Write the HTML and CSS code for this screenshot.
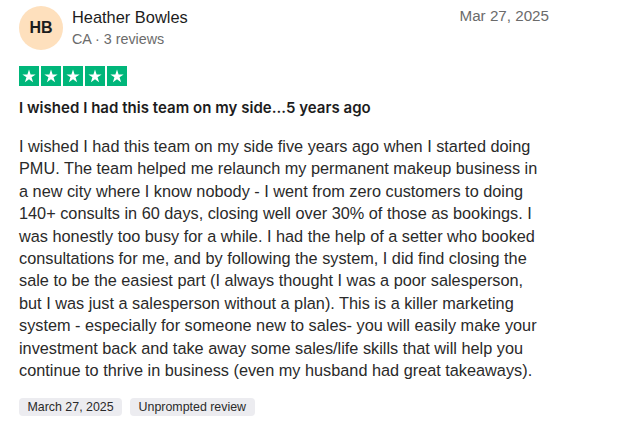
FILE: index.html
```html
<!DOCTYPE html>
<html>
<head>
<meta charset="utf-8">
<link rel="stylesheet" href="styles.css">
</head>
<body>
<article class="review">
  <header class="head">
    <div class="avatar">HB</div>
    <div class="who">
      <div class="name">Heather Bowles</div>
      <div class="meta">CA · 3 reviews</div>
    </div>
    <div class="date">Mar 27, 2025</div>
  </header>
  <div class="stars">
    <span class="star"><svg viewBox="0 0 20 20"><path d="M10 3.6l1.6 4.8h5.05l-4.1 2.95 1.55 4.85L10 13.2l-4.1 3 1.55-4.85-4.1-2.95h5.05z" fill="#fff"/></svg></span>
    <span class="star"><svg viewBox="0 0 20 20"><path d="M10 3.6l1.6 4.8h5.05l-4.1 2.95 1.55 4.85L10 13.2l-4.1 3 1.55-4.85-4.1-2.95h5.05z" fill="#fff"/></svg></span>
    <span class="star"><svg viewBox="0 0 20 20"><path d="M10 3.6l1.6 4.8h5.05l-4.1 2.95 1.55 4.85L10 13.2l-4.1 3 1.55-4.85-4.1-2.95h5.05z" fill="#fff"/></svg></span>
    <span class="star"><svg viewBox="0 0 20 20"><path d="M10 3.6l1.6 4.8h5.05l-4.1 2.95 1.55 4.85L10 13.2l-4.1 3 1.55-4.85-4.1-2.95h5.05z" fill="#fff"/></svg></span>
    <span class="star"><svg viewBox="0 0 20 20"><path d="M10 3.6l1.6 4.8h5.05l-4.1 2.95 1.55 4.85L10 13.2l-4.1 3 1.55-4.85-4.1-2.95h5.05z" fill="#fff"/></svg></span>
  </div>
  <h2 class="title">I wished I had this team on my side...5 years ago</h2>
  <p class="body">I wished I had this team on my side five years ago when I started doing<br>PMU. The team helped me relaunch my permanent makeup business in<br>a new city where I know nobody - I went from zero customers to doing<br>140+ consults in 60 days, closing well over 30% of those as bookings. I<br>was honestly too busy for a while. I had the help of a setter who booked<br>consultations for me, and by following the system, I did find closing the<br>sale to be the easiest part (I always thought I was a poor salesperson,<br>but I was just a salesperson without a plan). This is a killer marketing<br>system - especially for someone new to sales- you will easily make your<br>investment back and take away some sales/life skills that will help you<br>continue to thrive in business (even my husband had great takeaways).</p>
  <div class="tags">
    <span class="tag">March 27, 2025</span>
    <span class="tag">Unprompted review</span>
  </div>
</article>
</body>
</html>
```

FILE: styles.css
```css
html, body {
  margin: 0;
  padding: 0;
  background: #ffffff;
}
body {
  font-family: "Liberation Sans", Arial, sans-serif;
  color: #1c1c1c;
}
.review {
  padding: 6px 0 0 19px;
  width: 530px;
}
.head {
  display: flex;
  align-items: flex-start;
}
.avatar {
  width: 44px;
  height: 44px;
  border-radius: 50%;
  background: #fee0bd;
  color: #1c1c1c;
  font-weight: 700;
  font-size: 16px;
  display: flex;
  align-items: center;
  justify-content: center;
  flex: none;
}
.who {
  margin-left: 9px;
  flex: 1;
  padding-top: 1px;
}
.name {
  font-size: 16.4px;
  line-height: 20px;
  color: #1c1c1c;
}
.meta {
  font-size: 14.3px;
  line-height: 20px;
  color: #6b6b6b;
  margin-top: 2px;
}
.date {
  font-size: 15.2px;
  color: #6b6b6b;
  line-height: 20px;
}
.stars {
  display: flex;
  gap: 2px;
  margin-top: 16px;
}
.star {
  width: 20px;
  height: 20px;
  background: #00b67a;
  display: block;
}
.star svg {
  width: 20px;
  height: 20px;
  display: block;
}
.title {
  font-family: "Inter", "Liberation Sans", sans-serif;
  font-size: 15px;
  font-weight: 600;
  line-height: 22px;
  margin: 11px 0 0 0;
  color: #1c1c1c;
  letter-spacing: 0.03px;
}
.body {
  font-size: 16.3px;
  line-height: 22.4px;
  margin: 16px 0 0 0;
  color: #2a2a2a;
  white-space: nowrap;
}
.tags {
  display: flex;
  gap: 8px;
  margin-top: 17px;
}
.tag {
  background: #ececf0;
  border-radius: 4px;
  font-size: 12.4px;
  line-height: 18px;
  padding: 0 8.5px;
  color: #2a2a2a;
}
```
